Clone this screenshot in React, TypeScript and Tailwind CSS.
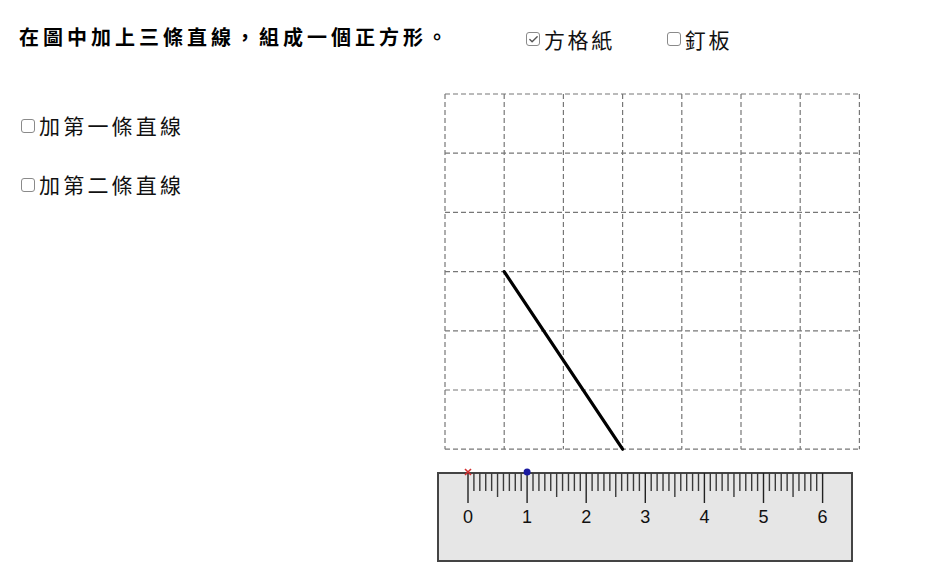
import { Check } from 'lucide-react';

const cell = 59.2;
const gridX = 9;
const gridY = 6;
const cols = 7;
const rows = 6;

const rulerX0 = 32;
const mm = 5.91;

const Box = ({ checked }: { checked?: boolean }) => (
    <span className="w-[14px] h-[14px] flex-shrink-0 flex items-center justify-center border-[1.5px] border-[#8a8a8a] rounded-[3px] bg-white">
        {checked && <Check size={11} strokeWidth={3} className="text-[#555]" />}
    </span>
);

const Option = ({ label, checked, wide }: { label: string; checked?: boolean; wide?: boolean }) => (
    <label className={`flex items-center gap-[4px] text-[21px] leading-none text-[#111] ${wide ? 'tracking-[3.2px]' : 'tracking-[2.6px]'}`}>
        <Box checked={checked} />
        <span>{label}</span>
    </label>
);

const GridBoard = () => {
    const w = cols * cell;
    const h = rows * cell;
    return (
        <svg width={424} height={476} viewBox="0 0 424 476" className="block">
            {Array.from({ length: cols + 1 }).map((_, i) => (
                <line
                    key={`v${i}`}
                    x1={gridX + i * cell}
                    y1={gridY}
                    x2={gridX + i * cell}
                    y2={gridY + h}
                    stroke="#777"
                    strokeWidth={1.2}
                    strokeDasharray="5 3"
                />
            ))}
            {Array.from({ length: rows + 1 }).map((_, j) => (
                <line
                    key={`h${j}`}
                    x1={gridX}
                    y1={gridY + j * cell}
                    x2={gridX + w}
                    y2={gridY + j * cell}
                    stroke="#777"
                    strokeWidth={1.2}
                    strokeDasharray="5 3"
                />
            ))}
            <line
                x1={gridX + cell}
                y1={gridY + 3 * cell}
                x2={gridX + 3 * cell}
                y2={gridY + 6 * cell}
                stroke="#000"
                strokeWidth={3.2}
                strokeLinecap="round"
            />

            {/* ruler */}
            <rect x={2} y={385} width={414} height={88} fill="#e6e6e6" stroke="#444" strokeWidth={2} />
            {Array.from({ length: 61 }).map((_, i) => {
                const x = rulerX0 + i * mm;
                const len = i % 10 === 0 ? 30 : i % 5 === 0 ? 24 : 18;
                return <line key={`t${i}`} x1={x} y1={385} x2={x} y2={385 + len} stroke={i % 10 === 0 ? '#222' : '#3a3a3a'} strokeWidth={1.4} />;
            })}
            {Array.from({ length: 7 }).map((_, i) => (
                <text
                    key={`n${i}`}
                    x={rulerX0 + i * mm * 10}
                    y={435}
                    textAnchor="middle"
                    fontSize={18}
                    fontFamily="'Liberation Sans', Arial, sans-serif"
                    fill="#111"
                >
                    {i}
                </text>
            ))}
            <g stroke="#d43030" strokeWidth={1.6}>
                <line x1={rulerX0 - 3} y1={381} x2={rulerX0 + 3} y2={387} />
                <line x1={rulerX0 - 3} y1={387} x2={rulerX0 + 3} y2={381} />
            </g>
            <circle cx={rulerX0 + mm * 10} cy={384} r={3.5} fill="#1a1aa0" />
        </svg>
    );
};

export default function App() {
    return (
        <div className="w-[939px] h-[564px] bg-white overflow-hidden" style={{ fontFamily: "'Noto Sans CJK TC', 'Noto Sans', sans-serif" }}>
            <div className="flex items-center h-[88px] pb-[14px]">
                <h1 className="pl-[19px] w-[526px] text-[20px] font-bold tracking-[4px] text-black leading-none">
                    在圖中加上三條直線，組成一個正方形。
                </h1>
                <div className="flex items-center gap-[52px] pt-[4px]">
                    <Option label="方格紙" checked />
                    <Option label="釘板" />
                </div>
            </div>
            <div className="flex">
                <div className="w-[436px] pl-[21px] pt-[27px] flex flex-col gap-[38px]">
                    <Option label="加第一條直線" wide />
                    <Option label="加第二條直線" wide />
                </div>
                <GridBoard />
            </div>
        </div>
    );
}
